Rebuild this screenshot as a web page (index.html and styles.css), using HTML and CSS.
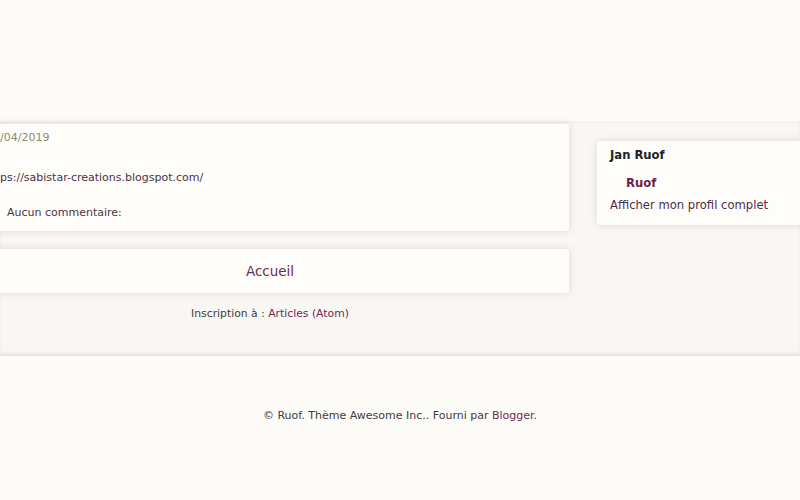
FILE: index.html
```html
<!DOCTYPE html>
<html lang="fr">
<head>
    <meta charset="UTF-8">
    <meta name="viewport" content="width=device-width, initial-scale=1.0">
    <title>Ruof</title>
    <link rel="stylesheet" href="styles.css">
</head>
<body>
    <header class="top"></header>

    <div class="main">
        <div class="posts">
            <div class="post">
                <p class="date">/04/2019</p>
                <p class="body"><a href="#">ps://sabistar-creations.blogspot.com/</a></p>
                <p class="comments"><a href="#">Aucun commentaire:</a></p>
            </div>
            <div class="pager">
                <a href="#">Accueil</a>
            </div>
            <p class="feed">Inscription à : <a href="#">Articles (Atom)</a></p>
        </div>

        <aside class="sidebar">
            <div class="widget">
                <h2>Jan Ruof</h2>
                <a class="name" href="#">Ruof</a>
                <a class="profile" href="#">Afficher mon profil complet</a>
            </div>
        </aside>
    </div>

    <footer class="foot">
        <p>© Ruof. Thème Awesome Inc.. Fourni par <a href="#">Blogger</a>.</p>
    </footer>
</body>
</html>
```

FILE: styles.css
```css
html, body {
    overflow: hidden;
}
body {
    margin: 0;
    font-family: "DejaVu Sans", sans-serif;
    background-color: #fcfbf8;
    color: #3d3d3d;
}
a {
    text-decoration: none;
}
.top {
    height: 121px;
}
.main {
    display: flex;
    align-items: flex-start;
    height: 232px;
    padding-top: 3px;
    background-color: #f8f7f3;
    box-shadow: inset 0 -4px 4px -2px rgba(0, 0, 0, 0.1), inset 0 3px 4px -2px rgba(0, 0, 0, 0.04);
}
.posts {
    width: 598px;
    margin-left: -29px;
    flex-shrink: 0;
}
.post {
    background-color: #fefdfa;
    border-radius: 0 3px 3px 0;
    box-shadow: 0 0 8px rgba(0, 0, 0, 0.12);
    padding: 7px 0 11px 29px;
    font-size: 11px;
}
.post p {
    margin: 0;
}
.date {
    color: #8c8a72;
    line-height: 14px;
}
.body {
    margin-top: 26px !important;
    line-height: 14px;
}
.body a {
    color: #4d3249;
}
.comments {
    margin-top: 21px !important;
    padding-left: 7px;
    line-height: 14px;
}
.comments a {
    color: #4d3249;
}
.pager {
    margin-top: 18px;
    height: 44px;
    line-height: 44px;
    text-align: center;
    font-size: 13.5px;
    background-color: #fefdfa;
    border-radius: 0 3px 3px 0;
    box-shadow: 0 0 8px rgba(0, 0, 0, 0.12);
}
.pager a {
    color: #6a2a5a;
}
.feed {
    margin: 14px 0 0;
    text-align: center;
    font-size: 10.8px;
    color: #3d3d3d;
}
.feed a {
    color: #6a2a5a;
}
.sidebar {
    margin-left: 28px;
    margin-top: 17px;
    width: 260px;
    flex-shrink: 0;
}
.widget {
    background-color: #fefdfa;
    border-radius: 3px 0 0 3px;
    box-shadow: 0 0 8px rgba(0, 0, 0, 0.12);
    padding: 7px 13px 12px;
    height: 65px;
}
.widget h2 {
    margin: 0;
    font-size: 11.6px;
    line-height: 14px;
    color: #222;
}
.name {
    display: block;
    margin: 14px 0 0 16px;
    font-size: 11.6px;
    font-weight: bold;
    line-height: 14px;
    color: #6b1f4f;
}
.profile {
    display: block;
    margin-top: 8px;
    font-size: 11.6px;
    line-height: 14px;
    color: #4f2c4a;
}
.foot {
    padding-top: 53px;
    text-align: center;
    font-size: 11px;
    color: #3d3d3d;
}
.foot p {
    margin: 0;
}
.foot a {
    color: #6a2a5a;
}
```
